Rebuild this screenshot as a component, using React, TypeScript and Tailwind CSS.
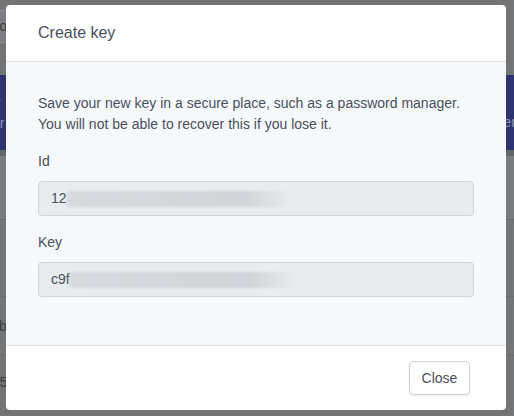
import React from 'react'

function BlurredValue({ prefix }: { prefix: string }) {
  return (
    <div className="flex h-[35px] items-center rounded-[4px] border border-[#ced4da] bg-[#e9ecef] px-3 text-[14px] text-[#495057]">
      <span>{prefix}</span>
      <span className="h-[16px] w-[226px] bg-gradient-to-r from-[#d6d9dd] via-[#d2d5d9] via-80% to-[#e9ecef] blur-[1px]" />
    </div>
  )
}

export default function App() {
  return (
    <div className="relative h-[416px] w-[514px] overflow-hidden bg-[#727476] font-['Liberation_Sans',Arial,sans-serif]">
      {/* page behind the dialog */}
      <div className="flex flex-col">
        <div className="h-[10px]" />
        <div className="ml-[-60px] flex h-[33px] w-[70px] items-center justify-end rounded-[3px] border border-[#8c8e90] bg-[#7c7e81] pr-[2px] text-[14px] text-[#3c3e40]">
          po
        </div>
        <div className="h-[32px]" />
        <div className="flex h-[75px] items-center justify-between bg-[#2e3470] text-[14px] leading-[21px] text-[#8d91b3]">
          <div className="ml-[-4px] flex flex-col">
            <span>r</span>
            <span className="ml-[-4px]">or</span>
          </div>
          <span className="mr-[-2px] mt-[20px]">er</span>
        </div>
        <div className="h-[6px] bg-[#636567]" />
        <div className="h-[64px] border-b border-[#67696b] bg-[#7a7c7e]" />
        <div className="h-[77px] border-b border-[#67696b]" />
        <div className="flex h-[59px] items-center border-b border-[#67696b] text-[14px] text-[#3a3c3e]">
          <span className="ml-[-1px]">b</span>
        </div>
        <div className="flex h-[52px] items-center text-[14px] text-[#3a3c3e]">
          <span className="ml-[-8px]">95</span>
        </div>
      </div>

      {/* dialog */}
      <div className="absolute left-[6px] top-[5px] flex w-[500px] flex-col overflow-hidden rounded-[4px] bg-white text-[#4a4f5c]">
        <div className="flex h-[57px] items-center border-b border-[#dee2e6] px-8 text-[16px]">
          Create key
        </div>
        <div className="flex flex-col bg-[#f5f9fc] px-8 pb-[48px] pt-[31px] text-[14px] leading-[21px]">
          <p>
            Save your new key in a secure place, such as a password manager.
            <br />
            You will not be able to recover this if you lose it.
          </p>
          <label className="mb-[9px] mt-[16px]">Id</label>
          <BlurredValue prefix="12" />
          <label className="mb-[9px] mt-[16px]">Key</label>
          <BlurredValue prefix="c9f" />
        </div>
        <div className="flex h-[65px] items-center justify-end border-t border-[#dee2e6] pr-[36px]">
          <button className="h-[34px] w-[61px] rounded-[4px] border border-[#ced4da] bg-white text-[14px] text-[#4a4f5c] shadow-[0_1px_2px_rgba(0,0,0,0.08)]">
            Close
          </button>
        </div>
      </div>
    </div>
  )
}
